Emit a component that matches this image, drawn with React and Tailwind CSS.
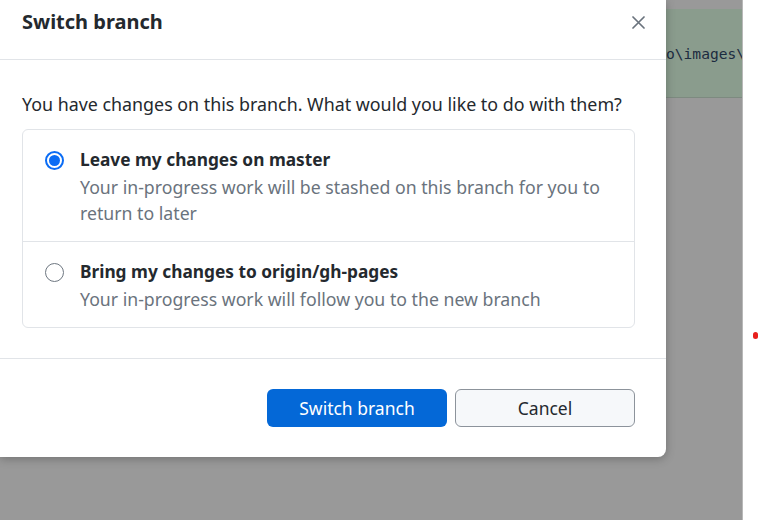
import React from "react";

function Radio({ checked }) {
  if (checked) {
    return (
      <div className="w-[19px] h-[19px] rounded-full border-2 border-[#0a6cf5] flex items-center justify-center shrink-0">
        <div className="w-[11px] h-[11px] rounded-full bg-[#0a6cf5]" />
      </div>
    );
  }
  return <div className="w-[19px] h-[19px] rounded-full border-[1.5px] border-[#6e7781] shrink-0" />;
}

function Option({ checked, title, desc, last }) {
  return (
    <div className={"flex gap-[16px] pl-[22px] pr-[20px] pt-[16px] pb-[15px]" + (last ? "" : " border-b border-[#e1e4e8]")}>
      <div className="h-[28px] flex items-center">
        <Radio checked={checked} />
      </div>
      <div className="flex flex-col">
        <div className="text-[17.3px] leading-[28px] font-bold text-[#24292e]">{title}</div>
        <div className="text-[17.7px] leading-[26px] text-[#6a737d]">{desc}</div>
      </div>
    </div>
  );
}

export default function App() {
  return (
    <div
      className="relative w-[759px] h-[520px] overflow-hidden bg-white flex"
      style={{ fontFamily: '"Noto Sans", "Liberation Sans", sans-serif' }}
    >
      <div className="w-[743px] h-full bg-[#999999] border-r border-[#b8b8b8] shrink-0">
        <div
          className="mt-[9px] h-[89px] bg-[#8a9c8d] border-b border-[#7d8a80] pl-[666px] pt-[35px] text-[14.6px] leading-[20px] text-[#1c2b40] whitespace-nowrap overflow-hidden"
          style={{ fontFamily: '"DejaVu Sans Mono", "Liberation Mono", monospace' }}
        >
          o\images\
        </div>
      </div>
      <div className="flex-1 pt-[332px] pl-[10px]">
        <div className="w-[5px] h-[7px] rounded-full bg-[#e8201c]" />
      </div>

      <div className="absolute left-0 top-0 w-[666px] bg-white rounded-br-[8px] shadow-[0_2px_10px_rgba(0,0,0,0.25)]">
        <div className="h-[60px] border-b border-[#e1e4e8] flex items-start justify-between pl-[22px] pr-[21px]">
          <div className="pt-[8px] text-[20px] leading-[28px] font-bold text-[#24292e]">Switch branch</div>
          <button className="mt-[16px] w-[13px] h-[13px] flex items-center justify-center">
            <svg width="13" height="13" viewBox="0 0 13 13">
              <path d="M1 1 L12 12 M12 1 L1 12" stroke="#6a737d" strokeWidth="1.7" strokeLinecap="round" />
            </svg>
          </button>
        </div>
        <div className="pt-[32px] pb-[30px] pl-[22px] pr-[31px]">
          <div className="text-[17.85px] leading-[24px] text-[#24292e] whitespace-nowrap">
            You have changes on this branch. What would you like to do with them?
          </div>
          <div className="mt-[13px] border border-[#e1e4e8] rounded-[6px]">
            <Option
              checked
              title="Leave my changes on master"
              desc="Your in-progress work will be stashed on this branch for you to return to later"
            />
            <Option
              last
              title="Bring my changes to origin/gh-pages"
              desc="Your in-progress work will follow you to the new branch"
            />
          </div>
        </div>
        <div className="border-t border-[#e1e4e8] pt-[30px] pb-[30px] pr-[31px] flex justify-end gap-[8px]">
          <button className="w-[180px] h-[38px] rounded-[6px] bg-[#0468d7] text-white text-[17.5px]">Switch branch</button>
          <button className="w-[180px] h-[38px] rounded-[6px] bg-[#f6f8fa] border border-[#8c939b] text-[#24292e] text-[17.5px]">Cancel</button>
        </div>
      </div>
    </div>
  );
}
